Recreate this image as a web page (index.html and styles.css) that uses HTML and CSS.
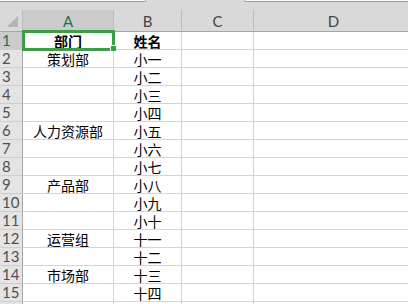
FILE: index.html
```html
<!DOCTYPE html>
<html lang="zh-CN">
<head>
    <meta charset="UTF-8">
    <title>Sheet1</title>
    <link rel="stylesheet" href="styles.css">
</head>
<body>
    <div class="topbar">
        <div class="namebox"></div>
        <div class="formula"></div>
    </div>
    <div class="sheet">
        <div class="grid">
            <div class="corner"><span class="tri"></span></div>
            <div class="colhead sel">A</div>
            <div class="colhead">B</div>
            <div class="colhead">C</div>
            <div class="colhead">D</div>

            <div class="rowhead sel">1</div><div class="cell bold">部门</div><div class="cell bold">姓名</div><div class="cell"></div><div class="cell"></div>
            <div class="rowhead">2</div><div class="cell">策划部</div><div class="cell">小一</div><div class="cell"></div><div class="cell"></div>
            <div class="rowhead">3</div><div class="cell"></div><div class="cell">小二</div><div class="cell"></div><div class="cell"></div>
            <div class="rowhead">4</div><div class="cell"></div><div class="cell">小三</div><div class="cell"></div><div class="cell"></div>
            <div class="rowhead">5</div><div class="cell"></div><div class="cell">小四</div><div class="cell"></div><div class="cell"></div>
            <div class="rowhead">6</div><div class="cell">人力资源部</div><div class="cell">小五</div><div class="cell"></div><div class="cell"></div>
            <div class="rowhead">7</div><div class="cell"></div><div class="cell">小六</div><div class="cell"></div><div class="cell"></div>
            <div class="rowhead">8</div><div class="cell"></div><div class="cell">小七</div><div class="cell"></div><div class="cell"></div>
            <div class="rowhead">9</div><div class="cell">产品部</div><div class="cell">小八</div><div class="cell"></div><div class="cell"></div>
            <div class="rowhead">10</div><div class="cell"></div><div class="cell">小九</div><div class="cell"></div><div class="cell"></div>
            <div class="rowhead">11</div><div class="cell"></div><div class="cell">小十</div><div class="cell"></div><div class="cell"></div>
            <div class="rowhead">12</div><div class="cell">运营组</div><div class="cell">十一</div><div class="cell"></div><div class="cell"></div>
            <div class="rowhead">13</div><div class="cell"></div><div class="cell">十二</div><div class="cell"></div><div class="cell"></div>
            <div class="rowhead">14</div><div class="cell">市场部</div><div class="cell">十三</div><div class="cell"></div><div class="cell"></div>
            <div class="rowhead">15</div><div class="cell"></div><div class="cell">十四</div><div class="cell"></div><div class="cell"></div>
            <div class="rowhead"></div><div class="cell"></div><div class="cell"></div><div class="cell"></div><div class="cell"></div>
        </div>
        <!-- active cell A1 -->
        <div class="selection"><span class="handle"></span></div>
    </div>
</body>
</html>
```

FILE: styles.css
```css
body {
    margin: 0;
    overflow: hidden;
    background: #ffffff;
    font-family: "Noto Sans CJK SC", sans-serif;
}
.topbar {
    height: 10px;
    background: #d9d9d9;
    display: flex;
    justify-content: space-between;
}
.namebox {
    width: 145px;
    height: 1px;
    background: #ffffff;
    border-bottom: 1px solid #9c9c9c;
    border-right: 1px solid #9c9c9c;
    border-bottom-right-radius: 3px;
}
.formula {
    width: 163px;
    height: 1px;
    background: #ffffff;
    border-bottom: 1px solid #9c9c9c;
    border-left: 1px solid #9c9c9c;
    border-bottom-left-radius: 3px;
}
.sheet {
    position: relative;
}
.grid {
    display: grid;
    grid-template-columns: 23px 91px 68px 72px 160px;
    grid-template-rows: 22px repeat(15, 18px) 3px;
}
.corner, .colhead {
    background: #d9d9d9;
    border-bottom: 1px solid #a6a6a6;
    box-sizing: border-box;
}
.corner {
    border-right: 1px solid #bdbdbd;
    position: relative;
}
.tri {
    position: absolute;
    right: 4px;
    bottom: 4px;
    width: 0;
    height: 0;
    border-left: 11px solid transparent;
    border-bottom: 11px solid #b4b4b4;
}
.colhead {
    border-right: 1px solid #bdbdbd;
    display: flex;
    align-items: center;
    justify-content: center;
    font-family: Lato, "Open Sans", sans-serif;
    font-size: 15px;
    color: #444444;
    padding-top: 1px;
}
.colhead.sel {
    background: #cbcbcb;
    color: #217346;
}
.rowhead {
    background: #e4e4e4;
    border-right: 1px solid #a6a6a6;
    border-bottom: 1px solid #cfcfcf;
    box-sizing: border-box;
    font-family: Lato, "Open Sans", sans-serif;
    font-size: 15px;
    line-height: 17px;
    color: #505050;
    padding-left: 2px;
    overflow: hidden;
}
.rowhead.sel {
    background: #cbcbcb;
    color: #217346;
}
.cell {
    border-right: 1px solid #d4d4d4;
    border-bottom: 1px solid #d4d4d4;
    box-sizing: border-box;
    font-size: 14px;
    line-height: 18px;
    color: #000000;
    text-align: center;
    white-space: nowrap;
    overflow: hidden;
}
.cell.bold {
    font-weight: bold;
}
.selection {
    position: absolute;
    left: 22px;
    top: 20px;
    width: 87px;
    height: 15px;
    border: 3px solid #3c9d45;
}
.handle {
    position: absolute;
    right: -4px;
    bottom: -3px;
    width: 5px;
    height: 5px;
    background: #3c9d45;
    border-left: 1px solid #ffffff;
    border-top: 1px solid #ffffff;
}
```
